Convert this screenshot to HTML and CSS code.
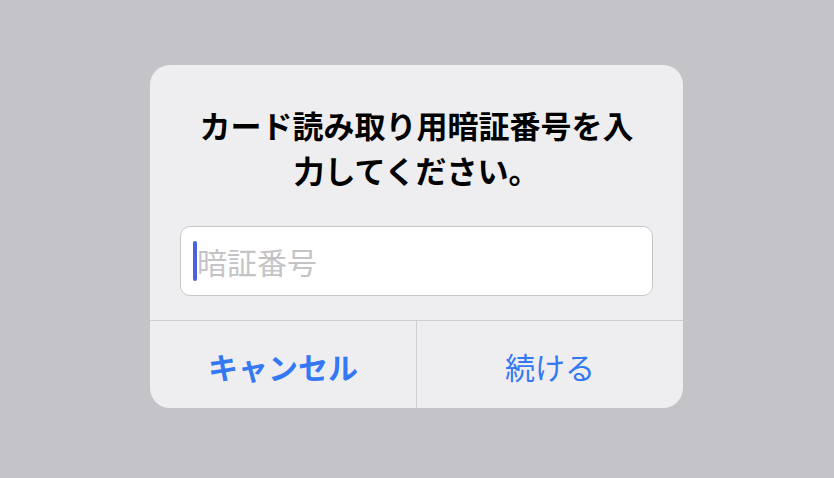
FILE: index.html
```html
<!DOCTYPE html>
<html lang="ja">
<head>
<meta charset="utf-8">
<link rel="stylesheet" href="styles.css">
</head>
<body>
<div class="alert">
  <div class="title">カード読み取り用暗証番号を入<br>力してください。</div>
  <div class="field">
    <span class="caret"></span>
    <span class="placeholder">暗証番号</span>
  </div>
  <div class="actions">
    <div class="btn cancel">キャンセル</div>
    <div class="btn ok">続ける</div>
  </div>
</div>
</body>
</html>
```
FILE: styles.css
```css
html, body {
  margin: 0;
  padding: 0;
  height: 100%;
}
body {
  background: #c4c3c8;
  font-family: "Noto Sans CJK JP", "Noto Sans", sans-serif;
  padding-top: 65px;
  box-sizing: border-box;
}
.alert {
  width: 533px;
  margin: 0 0 0 150px;
  background: #eeeef0;
  border-radius: 20px;
  overflow: hidden;
}
.title {
  padding-top: 37px;
  font-size: 31px;
  line-height: 45px;
  font-weight: 700;
  color: #000;
  text-align: center;
  letter-spacing: 0;
}
.field {
  margin: 34px 30px 24px;
  height: 70px;
  box-sizing: border-box;
  background: #fff;
  border: 1px solid #c7c7cb;
  border-radius: 10px;
  display: flex;
  align-items: center;
  padding-left: 12px;
}
.caret {
  width: 4px;
  height: 40px;
  background: #4b61e3;
  border-radius: 2px;
  flex: none;
}
.placeholder {
  font-size: 30px;
  color: #c4c4c7;
  margin-left: 0;
  line-height: 40px;
}
.actions {
  display: flex;
  border-top: 1px solid #cfcfd3;
  height: 88px;
  box-sizing: border-box;
}
.btn {
  flex: 1;
  display: flex;
  align-items: center;
  justify-content: center;
  font-size: 30px;
  color: #3478f3;
  padding-top: 2px;
}
.cancel {
  font-weight: 700;
  border-right: 1px solid #cfcfd3;
}
.ok {
  font-weight: 400;
}
```
